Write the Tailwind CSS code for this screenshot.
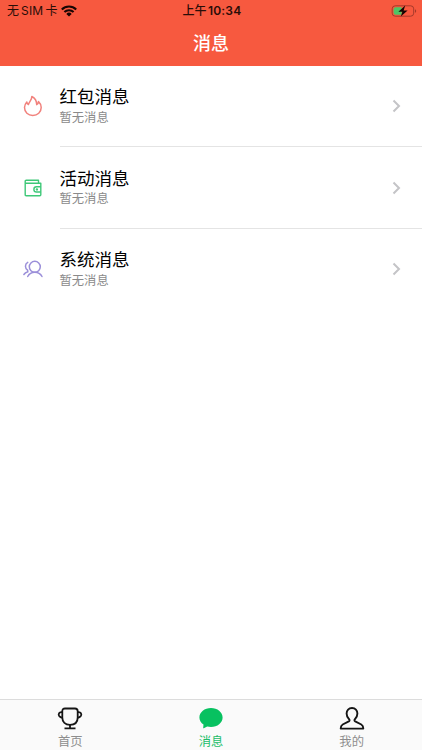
<!DOCTYPE html>
<html lang="zh-CN">
  <head>
    <meta charset="UTF-8" />
    <meta name="viewport" content="width=device-width, initial-scale=1.0" />
    <title>消息</title>
    <script src="https://cdn.jsdelivr.net/npm/@tailwindcss/browser@4"></script>
  </head>
  <body
    class="flex flex-col h-screen overflow-hidden bg-white font-['Inter','Noto_Sans_CJK_SC',sans-serif]"
  >
    <header class="flex flex-col h-[65.5px] shrink-0 bg-[#f7593f]">
      <div class="grid grid-cols-3 items-center h-[22px] pl-[7px] pr-[5px] text-[12px] text-[#2a0d08]">
        <div class="flex items-center">
          <span class="whitespace-nowrap">无<span class="mx-[2px] tracking-[0.2px]">SIM</span>卡</span>
          <svg class="ml-[4px] mb-px" width="16" height="12" viewBox="0 0 16 12" fill="none" stroke="#180503" stroke-width="2.1">
            <path d="M.8 4.4a10.3 10.3 0 0 1 14.4 0M3.4 7.1a6.5 6.5 0 0 1 9.2 0" />
            <path d="M5.3 8.9a3.9 3.9 0 0 1 5.4 0L8 11.5z" fill="#180503" stroke="none" />
          </svg>
        </div>
        <div class="text-center whitespace-nowrap"><span class="font-medium">上午</span> <span class="-ml-[2px] font-semibold tracking-[0.2px]">10:34</span></div>
        <div class="flex justify-end">
          <svg width="26" height="12" viewBox="0 0 26 12">
            <rect x="1.2" y=".8" width="21.5" height="10.4" rx="3" fill="none" stroke="#a5392a" />
            <path d="M4.6 2.2h6v7.6h-6a2 2 0 0 1-2-2V4.2a2 2 0 0 1 2-2z" fill="#4fc565" />
            <path d="M24 4.2c1.6.5 1.6 3.1 0 3.6z" fill="#a5392a" />
            <path d="M14.2.6 7.4 6.7h4l-1.6 4.9 6.8-6.2h-4z" fill="#120403" />
          </svg>
        </div>
      </div>
      <h1 class="h-[43.5px] text-center text-[18px] leading-[44px] font-medium text-white">消息</h1>
    </header>

    <main class="flex flex-col grow">
      <a class="flex h-[81.5px] shrink-0" href="#">
        <div class="flex justify-center items-center w-[59.5px] pl-[6px]">
          <svg width="20" height="22" viewBox="0 0 20 22" fill="none" stroke="#f1827d" stroke-width="1.5" stroke-linejoin="round">
            <path d="M8.8 1.5c.3 3.2-2.7 5.2-3.4 8C4.3 9 3.900 8 3.800 6.900 2.200 8.700 1.500 10.600 1.500 12.600c0 4.700 3.600 7.800 8.300 7.800s8.400-3.200 8.400-7.900c0-2.100-.9-4.300-2.700-5.900-.1 1.400-.7 2.400-1.800 3C13.700 6 12 3.100 8.800 1.500z" />
          </svg>
        </div>
        <div class="flex items-center grow border-b border-[#e4e4e4] pt-px pr-[21px]">
          <div class="grow">
            <h2 class="text-[17.5px] leading-[22px] text-black">红包消息</h2>
            <p class="text-[12.3px] leading-[19px] text-[#8a8a8a]">暂无消息</p>
          </div>
          <svg width="9" height="14" viewBox="0 0 9 14" fill="none" stroke="#c4c4c7" stroke-width="2"><path d="m1.5 1.5 5.5 5.5-5.5 5.5" /></svg>
        </div>
      </a>
      <a class="flex h-[81.5px] shrink-0" href="#">
        <div class="flex justify-center items-center w-[59.5px] pl-[6px]">
          <svg width="18" height="18" viewBox="0 0 18 18" fill="none" stroke="#3ec878" stroke-width="1.4" stroke-linejoin="round">
            <path d="M1.2 4.2V2.2Q1.2 1.2 2.2 1.2H14.5V4.2M1.2 4.2H16.8V15.7Q16.8 16.7 15.8 16.7H2.2Q1.2 16.7 1.2 15.7z" />
            <path d="M16.8 7.8H12.5a2.6 2.6 0 0 0 0 5.2H16.8" />
            <circle cx="12.9" cy="10.4" r=".5" />
          </svg>
        </div>
        <div class="flex items-center grow border-b border-[#e4e4e4] pt-[2px] pr-[21px]">
          <div class="grow">
            <h2 class="text-[17.5px] leading-[22px] text-black">活动消息</h2>
            <p class="text-[12.3px] leading-[18px] text-[#8a8a8a]">暂无消息</p>
          </div>
          <svg width="9" height="14" viewBox="0 0 9 14" fill="none" stroke="#c4c4c7" stroke-width="2"><path d="m1.5 1.5 5.5 5.5-5.5 5.5" /></svg>
        </div>
      </a>
      <a class="flex h-[81.5px] shrink-0" href="#">
        <div class="flex justify-center items-center w-[59.5px] pl-[6px]">
          <svg width="20" height="18" viewBox="0 0 20 18" fill="none" stroke="#9b8fd9" stroke-width="1.5" stroke-linecap="round">
            <circle cx="11.8" cy="6.8" r="5.5" />
            <path d="M4.7 16.5c1.5-2.8 4-4.2 7.1-4.2s5.7 1.4 7.2 4.2" />
            <path d="M4.7 2.4C1.9 3.8 1.6 8 4.6 10.2L4.8 11.7C3 12.3 1.7 13.2.9 14.5" />
          </svg>
        </div>
        <div class="flex items-center grow pr-[21px]">
          <div class="grow">
            <h2 class="text-[17.5px] leading-[22px] text-black">系统消息</h2>
            <p class="text-[12.3px] leading-[19px] text-[#8a8a8a]">暂无消息</p>
          </div>
          <svg width="9" height="14" viewBox="0 0 9 14" fill="none" stroke="#c4c4c7" stroke-width="2"><path d="m1.5 1.5 5.5 5.5-5.5 5.5" /></svg>
        </div>
      </a>
    </main>

    <nav class="grid grid-cols-3 h-[51px] shrink-0 border-t border-[#dcdcdc] bg-[#fafafa] text-[12.3px] leading-[20px] text-[#8e8e8e]">
      <a class="flex flex-col items-center pt-[6px]" href="#">
        <svg width="26" height="26" viewBox="0 0 26 26" fill="none" stroke="#151515" stroke-width="1.8" stroke-linejoin="round">
          <path d="M8 2.5h10q2.7 0 2.7 2.7v6.3c0 4.6-3 7.3-7.7 7.3s-7.7-2.7-7.7-7.3V5.2Q5.3 2.5 8 2.5z" />
          <path d="M5.3 6.2C2 5.5 1 8.3 2.2 10.1c.7 1 1.7 1.5 3.2 1.7M20.7 6.2c3.3-.7 4.3 2.1 3.1 3.9-.7 1-1.7 1.5-3.2 1.7" />
          <path d="M13 18.8v3.4M7.5 22.4h11" />
        </svg>
        <span>首页</span>
      </a>
      <a class="flex flex-col items-center pt-[6px] text-[#22bd69]" href="#">
        <svg width="26" height="26" viewBox="0 0 26 26" fill="#07c160">
          <path d="M13 1.9c6.4 0 11.6 4.2 11.6 9.5S19.4 20.9 13 20.9c-1.3 0-2.6-.2-3.8-.5L5.8 22.2q-.7.3-.6-.5l.3-3.2C3 16.7 1.4 14.2 1.4 11.4 1.4 6.1 6.6 1.9 13 1.9z" />
        </svg>
        <span>消息</span>
      </a>
      <a class="flex flex-col items-center pt-[6px]" href="#">
        <svg width="26" height="26" viewBox="0 0 26 26" fill="none" stroke="#151515" stroke-width="1.9" stroke-linejoin="round">
          <path d="M13 2c-3.3 0-5.4 2.3-5.4 5.5 0 2.4 1 4.3 2.5 5.7.7.7.6 1.7-.3 2.2L3.7 18.5C2.3 19.3 1.7 20.3 1.7 22.6H24.3c0-2.3-.6-3.3-2-4.1l-6.1-3.1c-.9-.5-1-1.5-.3-2.2 1.5-1.4 2.5-3.3 2.5-5.7C18.4 4.3 16.3 2 13 2z" />
        </svg>
        <span>我的</span>
      </a>
    </nav>
  </body>
</html>
